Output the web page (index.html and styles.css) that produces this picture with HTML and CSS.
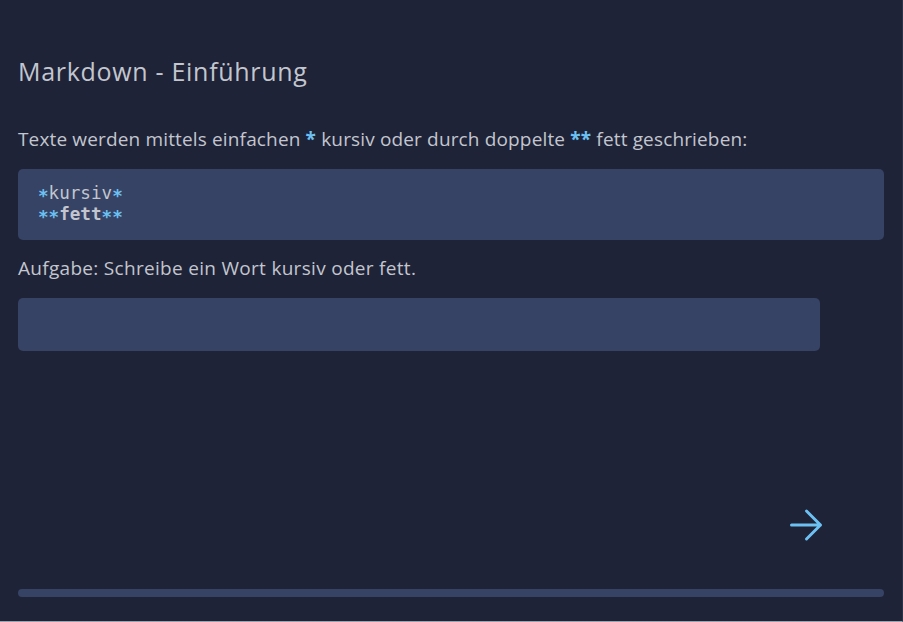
FILE: index.html
```html
<!DOCTYPE html>
<html lang="de">
<head>
<meta charset="utf-8">
<title>Markdown - Einführung</title>
<link rel="stylesheet" href="styles.css">
</head>
<body>
<div class="page">
  <main class="lesson">
    <h1 class="title">Markdown - Einführung</h1>
    <p class="text">Texte werden mittels einfachen <span class="mark">*</span> kursiv oder durch doppelte <span class="mark">**</span> fett geschrieben:</p>
    <pre class="code"><span class="star">*</span>kursiv<span class="star">*</span>
<span class="star">**</span><b>fett</b><span class="star">**</span></pre>
    <p class="text task">Aufgabe: Schreibe ein Wort kursiv oder fett.</p>
    <div class="answer"></div>
  </main>
  <div class="nav">
    <svg class="next" width="40" height="40" viewBox="0 0 40 40" aria-label="Weiter">
      <path d="M4.5 20 H33.5 M19.5 6 L33.5 20 L19.5 34" fill="none" stroke="#6cc0f2" stroke-width="3" stroke-linecap="round" stroke-linejoin="round"/>
    </svg>
  </div>
  <div class="progress"></div>
</div>
</body>
</html>
```
FILE: styles.css
```css
* { box-sizing: border-box; }
html, body {
  margin: 0;
  padding: 0;
  background: #1e2338;
}
.page {
  width: 903px;
  height: 622px;
  display: flex;
  flex-direction: column;
  padding: 57px 18px 24px 18px;
  border-right: 1px solid #2c3349;
  border-bottom: 1px solid #9ea2ac;
  font-family: "Open Sans", "Liberation Sans", sans-serif;
  color: #c3c6ce;
}
.lesson {
  flex: 1;
  display: flex;
  flex-direction: column;
}
.title {
  margin: 0 0 41px;
  font-size: 25px;
  line-height: 29px;
  font-weight: 400;
  letter-spacing: 0.7px;
  color: #c3c6ce;
}
.text {
  margin: 0;
  font-size: 19px;
  line-height: 24px;
  letter-spacing: 0.15px;
}
.task { letter-spacing: 0.3px; }
.mark {
  color: #6cc0f2;
  font-weight: 700;
}
.code {
  margin: 18px 0 16px;
  padding: 14px 20px 15px;
  background: #364365;
  border-radius: 5px;
  font-family: "DejaVu Sans Mono", monospace;
  font-size: 17.6px;
  line-height: 21px;
  color: #c3c6ce;
}
.star {
  color: #6cc0f2;
  font-weight: 700;
  vertical-align: -3px;
  line-height: 0;
}
.code b { font-weight: 700; }
.task { margin-bottom: 18px; }
.answer {
  width: 802px;
  height: 53px;
  background: #364365;
  border-radius: 5px;
}
.nav {
  display: flex;
  justify-content: flex-end;
  padding-right: 57px;
  margin-bottom: 44px;
}
.next { display: block; }
.progress {
  height: 8px;
  border-radius: 4px;
  background: #364365;
}
```
